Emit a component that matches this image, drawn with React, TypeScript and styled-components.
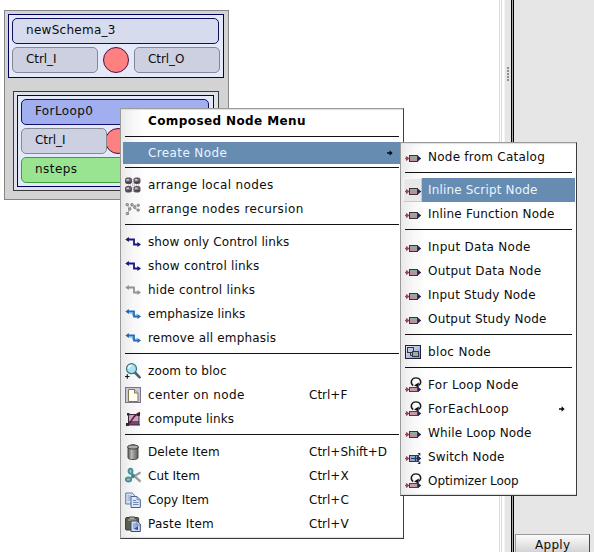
import React from "react";
import styled, { createGlobalStyle, css } from "styled-components";

const GlobalStyle = createGlobalStyle`
  * { box-sizing: border-box; }
  body { margin: 0; overflow: hidden; background: #fff; }
`;

const Page = styled.div`
  position: relative;
  display: grid;
  grid-template-columns: 504px 7px 1fr;
  width: 594px;
  height: 552px;
  overflow: hidden;
  font: 12px/14px "DejaVu Sans", sans-serif;
  color: #0c0c0c;
  background: #fff;
`;

/* ---- schema canvas ---- */
const Canvas = styled.main`
  padding: 10px 0 0 4px;
  background: linear-gradient(90deg, transparent 499px, #dcdcdc 499px 500px, #fff 500px 501px, #dcdcdc 501px 502px, #fff 502px);
`;
const Schema = styled.section`
  width: 225px;
  height: 190px;
  padding: 3px 4px 0 3px;
  border: 1px solid #858585;
  background: #d3d3d3;
`;
const SchemaHeader = styled.div`
  display: flex;
  flex-direction: column;
  gap: 3px;
  width: 216px;
  height: 64px;
  padding: 3px;
  border: 1px solid #000060;
  background: #e4e9f9;
`;
const LoopNode = styled.div`
  width: 206px;
  height: 100px;
  margin: 13px 0 0 5px;
  padding: 3px;
  border: 1px solid #3a3a3a;
  background: #dde1ea;
`;
const LoopBody = styled.div`
  display: flex;
  flex-direction: column;
  gap: 3px;
  height: 92px;
  width: 197px;
  padding: 3px;
  border: 1px solid #000060;
  background: #e4e9f9;
`;
const PortRow = styled.div`
  display: flex;
  gap: 5px;
`;
const tones = {
  title: css`background: #d7dbee; border-color: #10105c;`,
  loop: css`background: #a1aef0; border-color: #10106c;`,
  port: css`background: #ccd0e0; border-color: #858994;`,
  input: css`background: #98e490; border-color: #3f9d3c;`,
};
const NodeBox = styled.div<{ $tone: keyof typeof tones; $width: number }>`
  position: relative;
  z-index: 1;
  width: ${p => p.$width}px;
  height: 26px;
  flex: none;
  padding: 4px 0 0 13px;
  border: 1px solid;
  border-radius: 5px;
  white-space: nowrap;
  ${p => tones[p.$tone]}
`;
const Status = styled.div<{ $tight?: boolean }>`
  width: 26px;
  height: 26px;
  flex: none;
  margin-left: ${p => (p.$tight ? -7 : 0)}px;
  border: 1px solid #4a1045;
  border-radius: 50%;
  background: #ff8080;
`;

/* ---- splitter and side panel ---- */
const Splitter = styled.div`
  display: flex;
  flex-direction: column;
  align-items: center;
  gap: 1px;
  padding: 67px 0 0 1px;
  background: linear-gradient(90deg, #f4f4f4 1px, #e6e6e6 1px);
`;
const Grip = styled.i`
  width: 2px;
  height: 2px;
  background: #8e8e8e;
`;
const SidePanel = styled.aside`
  display: flex;
  flex-direction: column;
  justify-content: flex-end;
  padding-left: 4px;
  background: linear-gradient(90deg, #000 1px, #a8a8a8 1px 2px, #000 2px 3px, #e6e6e6 3px);
`;
const ApplyButton = styled.button`
  width: 75px;
  height: 18px;
  padding: 4px 0 0 19px;
  border: 1px solid #4a4a4a;
  border-left-color: #999;
  border-top-color: #999;
  border-bottom: 0;
  background: linear-gradient(#fbfbfb, #d4d4d4);
  font: inherit;
  line-height: 13px;
  text-align: left;
  color: inherit;
`;

/* ---- menus ---- */
const Menu = styled.nav`
  position: absolute;
  z-index: 2;
  display: flex;
  flex-direction: column;
  border: 1px solid #3c3c3c;
  border-top-color: #9a9a9a;
  border-left-color: #9a9a9a;
  background: linear-gradient(90deg, #e9e9e9, #f5f5f5 10px, #fff 24px);
  box-shadow: inset 0 2px 1px -1px #ddd, inset 0 -2px 1px -1px #ddd;
`;
const ContextMenu = styled(Menu)`
  left: 120px;
  top: 108px;
  width: 284px;
  height: 431px;
`;
const SubMenu = styled(Menu)`
  left: 400px;
  top: 142px;
  width: 177px;
  height: 354px;
  padding-top: 2px;
`;
const MenuTitle = styled.div`
  height: 24px;
  padding: 5px 0 0 27px;
  font-weight: bold;
  color: #000;
`;
const Divider = styled.div`
  height: 1px;
  flex: none;
  margin: 3px 4px 5px;
  background: #111;
`;
const Item = styled.div<{ $short?: boolean; $active?: boolean }>`
  display: flex;
  align-items: center;
  flex: none;
  height: ${p => (p.$short ? 22 : 24)}px;
  margin: 0 1px 0 2px;
  padding-left: 2px;
  ${p => p.$active && css`
    background: #678cb1;
    color: #e9f5ff;
  `}
`;
const IconCell = styled.span<{ $raised?: boolean }>`
  display: flex;
  align-items: center;
  align-self: stretch;
  flex: none;
  width: 16px;
  margin-right: 7px;
  ${p => p.$raised && css`
    width: 19px;
    margin: 0 6px 0 -2px;
    padding-left: 1px;
    border: 1px solid #f7f7f7;
    border-right-color: #c8c8c8;
    border-bottom-color: #c8c8c8;
    background: #e8e8e8;
  `}
`;
const Label = styled.span<{ $track?: number }>`
  white-space: nowrap;
  letter-spacing: ${p => p.$track ?? 0}px;
`;
const ItemLabel = styled(Label)`
  flex: 0 0 161px;
`;
const SubLabel = styled(Label)`
  flex: 0 0 131px;
`;
const Arrow = styled.svg<{ $inset?: number }>`
  flex: none;
  margin-left: ${p => p.$inset ?? 0}px;
`;
const Glyph = styled.svg`
  display: block;
  flex: none;
  overflow: visible;
`;

type Kind =
  | "grid" | "tree" | "linkNavy" | "linkBlue" | "linkGray" | "linkSky" | "zoom" | "page" | "compute"
  | "trash" | "cut" | "copy" | "paste" | "node" | "bloc" | "loop" | "switch";

const linkColor: Partial<Record<Kind, string>> = {
  linkNavy: "#19197c", linkBlue: "#171785", linkGray: "#929292", linkSky: "#276bb4",
};

const Port = ({ y = 9.5 }: { y?: number }) => (
  <>
    <path d={`M0 ${y}h4M1.5 ${y - 2}v4`} stroke="#94495c" strokeWidth="1.2" />
    <path d={`M1.4 ${y - 2.6}l3 2.6-3 2.6z`} fill="#9c4258" />
    <path d={`M12.5 ${y}h3`} stroke="#22224d" />
    <path d={`M13 ${y - 2.8}l3.2 2.8-3.2 2.8z`} fill="#22224d" />
  </>
);

function Icon({ kind }: { kind: Kind }) {
  const link = linkColor[kind];
  return (
    <Glyph width="16" height="16" viewBox="0 0 16 16" fill="none">
      <defs>
        <linearGradient id="nodeFill" x1="0" y1="0" x2="0" y2="1">
          <stop offset="0" stopColor="#83b79a" /><stop offset=".5" stopColor="#a79b9b" /><stop offset="1" stopColor="#c4889a" />
        </linearGradient>
        <linearGradient id="blocFill" x1="0" y1="0" x2="1" y2="1">
          <stop offset="0" stopColor="#edf1fb" /><stop offset="1" stopColor="#8290b8" />
        </linearGradient>
        <linearGradient id="canFill"><stop offset="0" stopColor="#555" /><stop offset=".35" stopColor="#e4e4df" /><stop offset="1" stopColor="#55554f" /></linearGradient>
      </defs>
      {link && (
        <>
          <path d="M2 5.5h7v5h5" stroke={link} strokeWidth="1.8" />
          <path d="M.3 5.5l3.6-2.4v4.8zM16 10.5l-3.6-2.4v4.8z" fill={link} />
          {kind === "linkSky" && <path d="M4 7h3.5v2.5M10.5 9H13" stroke="#61b6e0" />}
        </>
      )}
      {kind === "grid" && (
        <>
          <path d="M3 8h11M8 2v13" stroke="#a7a0ac" strokeDasharray="1 1" />
          {[[.5, 1], [9, 1], [.5, 9.5], [9, 9.5]].map(([x, y]) => (
            <g key={`${x}-${y}`}>
              <rect x={x} y={y} width="6" height="5.5" rx="1.5" fill="#6f6570" stroke="#5b515e" />
              <path d={`M${x + 1} ${y + 1}h2.5v1.8h-2.5z`} fill="#c9c3cf" />
              <path d={`M${x + 1} ${y + 4.3}h4.5`} stroke="#38303c" />
            </g>
          ))}
        </>
      )}
      {kind === "tree" && (
        <>
          <path d="M2.5 4l2 4-2 5M4.5 8l2.5-4M8 5l3-1M9 7.5l4 1" stroke="#aaa" />
          {[[1, 2.5], [5.8, 2.5], [12, 3.2], [3.5, 7], [8.5, 5.2], [12, 8], [1.2, 11.5]].map(([x, y]) => (
            <rect key={`${x}-${y}`} x={x} y={y} width="2.4" height="2.2" rx=".8" fill="#b5adb2" stroke="#756d73" strokeWidth=".8" />
          ))}
        </>
      )}
      {kind === "zoom" && (
        <>
          <path d="M10 9.5l4.6 4.8" stroke="#51606a" strokeWidth="2.6" strokeLinecap="round" />
          <circle cx="6.5" cy="5.7" r="5" fill="#a9e1ee" stroke="#41707f" strokeWidth="1.2" />
          <path d="M3.5 5.5c0-2 1.5-3 3.2-3" stroke="#f4ffff" strokeWidth="1.6" />
          <path d="M0 13.5h4.5M2.3 11.3v4.5" stroke="#111" strokeWidth="1.1" />
        </>
      )}
      {kind === "page" && (
        <>
          <rect x=".5" y=".5" width="15" height="15" fill="#c9c7d9" stroke="#78738f" />
          <path d="M3.5 2.5h6l3.5 3.5v8.5H3.5z" fill="#fffff1" stroke="#85754b" />
          <path d="M9.5 2.5V6H13" stroke="#85754b" fill="#ddd5b1" />
        </>
      )}
      {kind === "compute" && (
        <>
          <rect x="4" y="4" width="10" height="10" fill="#c9a0bd" />
          <path d="M4 10h10v4H4z" fill="#704872" />
          <path d="M2 3.5h12M3.5 2v12M14 3v11M2 14h13" stroke="#352a39" strokeWidth="1" />
          <path d="M1 14.5C7 13 6 5 15 1.5" stroke="#6c1431" strokeWidth="1.5" />
          <path d="M2 2h2.5v2.5H2zM12 2h3v3h-3zM1 12h3v3H1z" fill="#302636" />
        </>
      )}
      {kind === "trash" && (
        <>
          <path d="M3 3v11c1 2 9 2 10 0V3z" fill="url(#canFill)" stroke="#4b4b48" />
          <path d="M5 5v9M7 5v10M9 5v10M11 5v9" stroke="#696966" strokeWidth=".7" />
          <ellipse cx="8" cy="3" rx="5.5" ry="2.1" fill="#aaa9a5" stroke="#3d3d3b" />
          <path d="M6 1.4c1-1 3-1 4 0" stroke="#555" />
        </>
      )}
      {kind === "cut" && (
        <>
          <path d="M5.5 10.5L15.5 4.5M6 5l9.5 8.5" stroke="#a9adae" strokeWidth="2.5" />
          <path d="M6 5l9.5 9M15.5 4.2L9 8" stroke="#7b8082" strokeWidth=".7" />
          <ellipse cx="5.5" cy="3.2" rx="2" ry="2.6" fill="#8fc3c6" stroke="#4b8f94" strokeWidth="1.8" />
          <ellipse cx="3.5" cy="11.5" rx="2.7" ry="2" fill="#8fc3c6" stroke="#4b8f94" strokeWidth="1.8" />
          <circle cx="8" cy="8" r="2" fill="#3b858b" />
        </>
      )}
      {kind === "copy" && (
        <>
          <path d="M.7 1h6.5L10 3.8V12H.7z" fill="#d6e1f7" stroke="#64779d" />
          <path d="M2.5 4h4M2.5 6h4M2.5 8h3" stroke="#849ac1" />
          <path d="M6 4.5h6l3.3 3.3v7.7H6z" fill="#dce7fb" stroke="#4d628e" />
          <path d="M12 4.5v3.3h3.3M8 8.5h3M8 10.5h5.5M8 12.5h5.5" stroke="#7188b5" />
        </>
      )}
      {kind === "paste" && (
        <>
          <rect x=".6" y="1.5" width="13" height="12.5" rx="1" fill="#5c604b" stroke="#343927" />
          <path d="M4 3V1h6v2" fill="#aaa" stroke="#424640" />
          <path d="M3 4h8" stroke="#b8b9a2" />
          <path d="M6 5h6l3.3 3v7.5H6z" fill="#cfddf6" stroke="#384e78" />
          <path d="M8 8h4M8 10h5M8 12h3M12 6v3h3" stroke="#6582b9" />
          <path d="M9 13l4-3v4z" fill="#344f86" />
        </>
      )}
      {kind === "node" && (
        <>
          <Port />
          <rect x="4.5" y="6.5" width="8" height="6" fill="url(#nodeFill)" stroke="#3c3041" />
        </>
      )}
      {kind === "switch" && (
        <>
          <Port />
          <rect x="4.5" y="6.5" width="8" height="6" fill="#8fa9bf" stroke="#3c3041" />
          <path d="M6 9.5h8M10.5 7v5M12 8.5l2.8-3.5M12 10.5l2.8 3.5" stroke="#263766" strokeWidth="1.1" />
          <path d="M12.5 4h2.8v2.8zM12.5 15h2.8v-2.8z" fill="#22224d" />
        </>
      )}
      {kind === "loop" && (
        <>
          <Port y={12.5} />
          <rect x="4.5" y="10.5" width="8" height="4" fill="#c39aac" stroke="#5a3448" />
          <path d="M8.2 8.6C4.6 6 6.4.9 11 .9s6.2 4.6 3 7.2" stroke="#16161c" strokeWidth="1.4" />
          <path d="M9 8.5l4.8-3-.2 5z" fill="#101018" />
        </>
      )}
      {kind === "bloc" && (
        <>
          <rect x=".5" y="1.5" width="15" height="13" fill="url(#blocFill)" stroke="#20203a" />
          <rect x="2.5" y="3.5" width="6" height="5" fill="#bdc7e6" stroke="#33334b" />
          <path d="M5.5 8.5v3h2" stroke="#33334b" />
          <rect x="7.5" y="7.5" width="6" height="5" fill="#9aaf9a" stroke="#33334b" />
        </>
      )}
    </Glyph>
  );
}

const SubArrow = ({ inset }: { inset?: number }) => (
  <Arrow $inset={inset} width="6" height="6" viewBox="0 0 6 6">
    <path d="M0 2.3h2.6V.3L5.6 3l-3 2.7v-2H0z" fill="#080812" />
  </Arrow>
);

type Entry = { icon: Kind; text: string; track: number; keys?: string; active?: boolean; more?: boolean };

const groups: Entry[][] = [
  [
    { icon: "grid", text: "arrange local nodes", track: 0.36 },
    { icon: "tree", text: "arrange nodes recursion", track: 0.4 },
  ],
  [
    { icon: "linkNavy", text: "show only Control links", track: 0.12 },
    { icon: "linkBlue", text: "show control links", track: 0.21 },
    { icon: "linkGray", text: "hide control links", track: 0.25 },
    { icon: "linkSky", text: "emphasize links", track: 0.08 },
    { icon: "linkSky", text: "remove all emphasis", track: 0.18 },
  ],
  [
    { icon: "zoom", text: "zoom to bloc", track: 0.12 },
    { icon: "page", text: "center on node", track: 0.4, keys: "Ctrl+F" },
    { icon: "compute", text: "compute links", track: 0.15 },
  ],
  [
    { icon: "trash", text: "Delete Item", track: 0.12, keys: "Ctrl+Shift+D" },
    { icon: "cut", text: "Cut Item", track: 0, keys: "Ctrl+X" },
    { icon: "copy", text: "Copy Item", track: -0.08, keys: "Ctrl+C" },
    { icon: "paste", text: "Paste Item", track: 0.25, keys: "Ctrl+V" },
  ],
];

const subGroups: Entry[][] = [
  [{ icon: "node", text: "Node from Catalog", track: 0.24 }],
  [
    { icon: "node", text: "Inline Script Node", track: 0.17, active: true },
    { icon: "node", text: "Inline Function Node", track: 0.19 },
  ],
  [
    { icon: "node", text: "Input Data Node", track: 0.27 },
    { icon: "node", text: "Output Data Node", track: 0.25 },
    { icon: "node", text: "Input Study Node", track: 0.19 },
    { icon: "node", text: "Output Study Node", track: 0.2 },
  ],
  [{ icon: "bloc", text: "bloc Node", track: 0.34 }],
  [
    { icon: "loop", text: "For Loop Node", track: 0.33 },
    { icon: "loop", text: "ForEachLoop", track: 0.4, more: true },
    { icon: "node", text: "While Loop Node", track: 0.16 },
    { icon: "switch", text: "Switch Node", track: 0.15 },
    { icon: "loop", text: "Optimizer Loop", track: -0.05 },
  ],
];

export default function App() {
  return (
    <Page>
      <GlobalStyle />
      <Canvas>
        <Schema>
          <SchemaHeader>
            <NodeBox $tone="title" $width={207}><Label $track={0.28}>newSchema_3</Label></NodeBox>
            <PortRow>
              <NodeBox $tone="port" $width={86}><Label $track={-0.07}>Ctrl_I</Label></NodeBox>
              <Status />
              <NodeBox $tone="port" $width={86}><Label $track={-0.07}>Ctrl_O</Label></NodeBox>
            </PortRow>
          </SchemaHeader>
          <LoopNode>
            <LoopBody>
              <NodeBox $tone="loop" $width={188}><Label $track={0.4}>ForLoop0</Label></NodeBox>
              <PortRow>
                <NodeBox $tone="port" $width={86}><Label $track={-0.07}>Ctrl_I</Label></NodeBox>
                <Status $tight />
              </PortRow>
              <NodeBox $tone="input" $width={188}><Label $track={0.45}>nsteps</Label></NodeBox>
            </LoopBody>
          </LoopNode>
        </Schema>
      </Canvas>
      <Splitter>
        {[0, 1, 2, 3, 4].map(i => <Grip key={i} />)}
      </Splitter>
      <SidePanel>
        <ApplyButton><Label $track={0.3}>Apply</Label></ApplyButton>
      </SidePanel>

      <ContextMenu>
        <MenuTitle><Label $track={0.4}>Composed Node Menu</Label></MenuTitle>
        <Divider />
        <Item $short $active>
          <IconCell />
          <ItemLabel $track={0.38}>Create Node</ItemLabel>
          <SubArrow inset={78} />
        </Item>
        {groups.map((group, g) => (
          <React.Fragment key={g}>
            <Divider />
            {group.map(e => (
              <Item key={e.text}>
                <IconCell><Icon kind={e.icon} /></IconCell>
                <ItemLabel $track={e.track}>{e.text}</ItemLabel>
                {e.keys && <Label>{e.keys}</Label>}
              </Item>
            ))}
          </React.Fragment>
        ))}
      </ContextMenu>

      <SubMenu>
        {subGroups.map((group, g) => (
          <React.Fragment key={g}>
            {g > 0 && <Divider />}
            {group.map(e => (
              <Item key={e.text} $active={e.active}>
                <IconCell $raised={e.active}><Icon kind={e.icon} /></IconCell>
                <SubLabel $track={e.track}>{e.text}</SubLabel>
                {e.more && <SubArrow />}
              </Item>
            ))}
          </React.Fragment>
        ))}
      </SubMenu>
    </Page>
  );
}
